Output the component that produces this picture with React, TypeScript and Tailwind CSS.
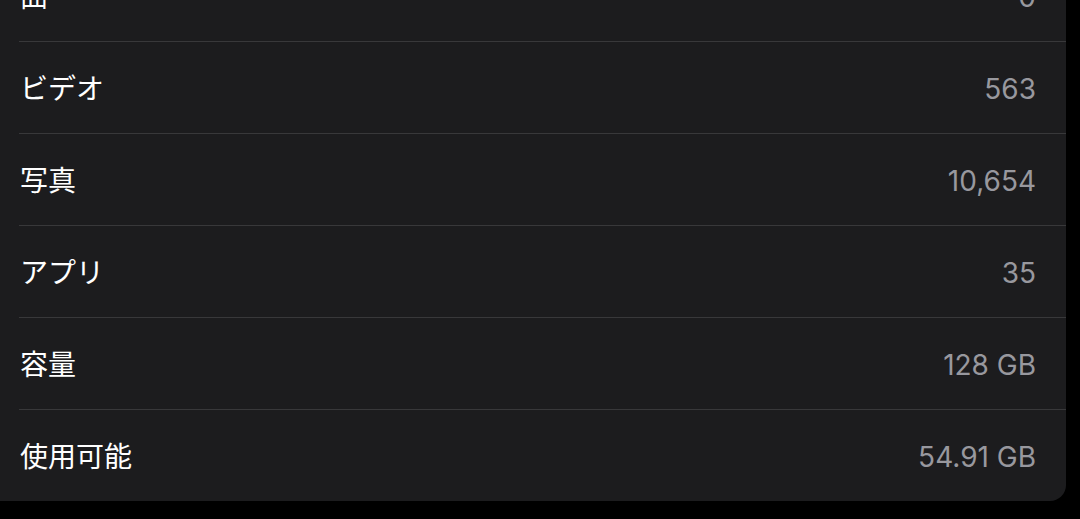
import React from 'react';

const ROWS: { label: string; value: string }[] = [
  { label: '曲', value: '0' },
  { label: 'ビデオ', value: '563' },
  { label: '写真', value: '10,654' },
  { label: 'アプリ', value: '35' },
  { label: '容量', value: '128 GB' },
  { label: '使用可能', value: '54.91 GB' },
];

const App: React.FC = () => {
  return (
    <div
      className="h-[519px] w-[1080px] overflow-hidden bg-black"
      style={{ fontFamily: 'Inter, "Noto Sans CJK JP", sans-serif' }}
    >
      <div className="ml-[-14px] mt-[-50px] w-[1080px] rounded-b-[16px] bg-[#1c1c1e]">
        {ROWS.map((row, i) => (
          <div key={row.label} className="pl-[33px]">
            {i > 0 && <div className="h-[1.5px] bg-[#38383a]" />}
            <div className="flex h-[90.5px] items-center justify-between pl-[1px] pr-[30px] pt-[3px]">
              <span className="text-[28px] text-white">{row.label}</span>
              <span className="text-[28px] text-[#98989e]">{row.value}</span>
            </div>
          </div>
        ))}
      </div>
    </div>
  );
};

export default App;
